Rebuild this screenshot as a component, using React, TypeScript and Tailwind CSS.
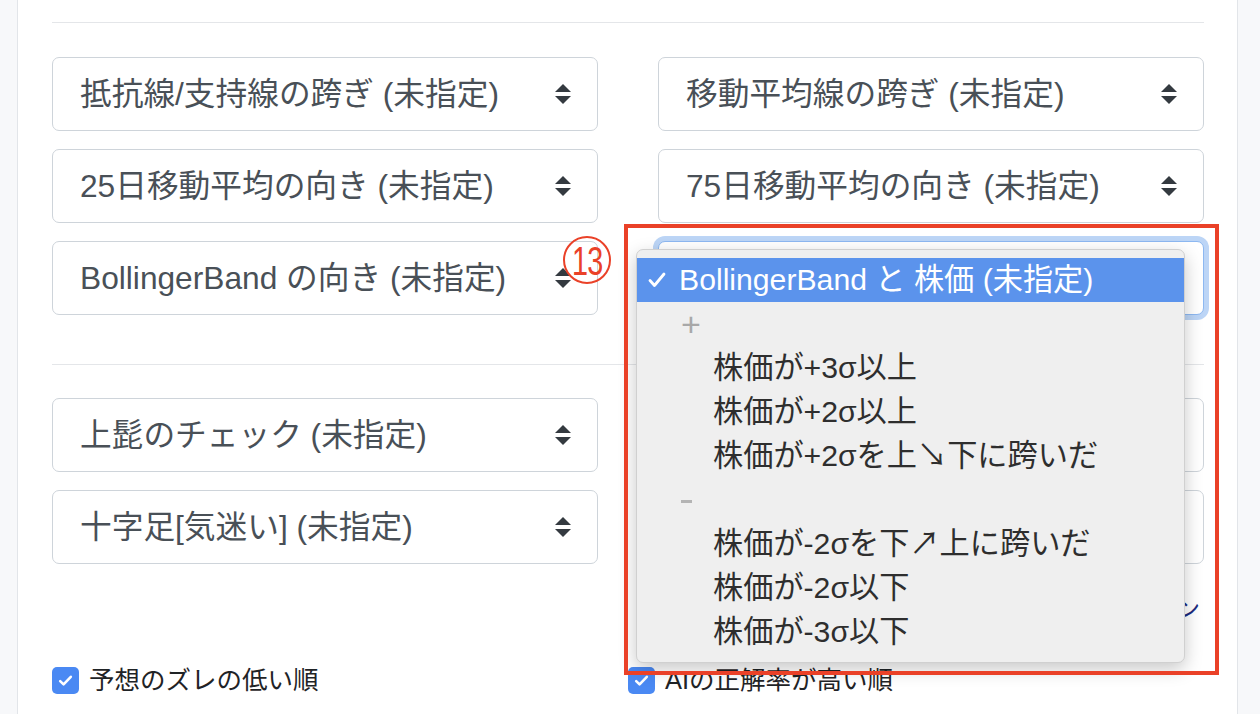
import clsx from "clsx";

const topRows = [
  ["抵抗線/支持線の跨ぎ (未指定)", "移動平均線の跨ぎ (未指定)"],
  ["25日移動平均の向き (未指定)", "75日移動平均の向き (未指定)"],
  ["BollingerBand の向き (未指定)", ""],
];

const bottomRows = [
  ["上髭のチェック (未指定)", "下髭のチェック (未指定)"],
  ["十字足[気迷い] (未指定)", "大陽線/大陰線 (未指定)"],
];

const options = [
  { group: "+", items: ["株価が+3σ以上", "株価が+2σ以上", "株価が+2σを上↘下に跨いだ"] },
  { group: "-", items: ["株価が-2σを下↗上に跨いだ", "株価が-2σ以下", "株価が-3σ以下"] },
];

function Select({ label, focused }: { label: string; focused?: boolean }) {
  return (
    <div
      className={clsx(
        "h-[74px] rounded-[7px] border bg-white flex items-center pl-[27px] pr-[26px] text-[31.7px] text-[#495057]",
        focused ? "border-[#8db8f1] ring-[5px] ring-[#bcd5f6]" : "border-[#ced4da]"
      )}
    >
      <span className="flex-1 whitespace-nowrap leading-[40px]">{label}</span>
      <svg width="16" height="20" viewBox="0 0 4 5" className="shrink-0">
        <path d="M2 0L0 2h4zm0 5L0 3h4z" fill="#343a40" />
      </svg>
    </div>
  );
}

function Check({ label }: { label: string }) {
  return (
    <label className="flex items-center gap-[10px] text-[25.5px] text-[#1f2326] leading-[31px]">
      <span className="w-[27px] h-[27px] rounded-[5px] bg-[#4a89f3] flex items-center justify-center">
        <svg width="17" height="17" viewBox="0 0 16 16" fill="none">
          <path d="M3 8.5l3.2 3.2L13 4.5" stroke="white" strokeWidth="2.4" strokeLinecap="round" strokeLinejoin="round" />
        </svg>
      </span>
      {label}
    </label>
  );
}

export default function App() {
  return (
    <div className="relative w-[1260px] h-[714px] overflow-hidden bg-[#f7f8fa] flex font-['Liberation_Sans','Noto_Sans_CJK_JP',sans-serif]">
      <div className="w-[17px] shrink-0" />
      <div className="w-[1221px] shrink-0 bg-white border-x border-[#e2e5e9] pl-[34px] pr-[33px]">
        <div className="h-[22px]" />
        <div className="border-t border-[#e4e6e9]" />

        <div className="mt-[34px] grid grid-cols-2 gap-x-[60px] gap-y-[18px]">
          {topRows.map(([l, r], i) => (
            <div key={i} className="contents">
              <Select label={l} />
              <Select label={r} focused={i === 2} />
            </div>
          ))}
        </div>

        <div className="mt-[49px] border-t border-[#e4e6e9]" />

        <div className="mt-[33px] grid grid-cols-2 gap-x-[60px] gap-y-[18px]">
          {bottomRows.map(([l, r], i) => (
            <div key={i} className="contents">
              <Select label={l} />
              <Select label={r} />
            </div>
          ))}
        </div>

        <div className="mt-[30px] h-[30px] text-right text-[24px] leading-[30px] text-[#1c2b7e] pr-[4px]">
          詳細検索オプション
        </div>

        <div className="mt-[41px] grid grid-cols-2">
          <Check label="予想のズレの低い順" />
          <Check label="AIの正解率が高い順" />
        </div>
      </div>
      <div className="flex-1" />

      {/* dropdown menu of the focused select */}
      <div className="absolute left-[636px] top-[249px] w-[549px] rounded-[7px] bg-[#efefef] border border-[#d0d0d0] shadow-[0_6px_18px_rgba(0,0,0,0.22)] py-[8px] text-[30.2px] leading-[36px] text-[#2e2e2e]">
        <div className="h-[44px] bg-[#5b93ec] text-white flex items-center">
          <span className="w-[42px] pl-[11px] flex items-center">
            <svg width="18" height="16" viewBox="0 0 18 16" fill="none">
              <path d="M2 8.5l4.5 5L16 2" stroke="white" strokeWidth="2.8" strokeLinecap="round" strokeLinejoin="round" />
            </svg>
          </span>
          <span className="whitespace-nowrap">BollingerBand と 株価 (未指定)</span>
        </div>
        {options.map((g) => (
          <div key={g.group}>
            <div className="h-[44px] flex items-center pl-[44px] text-[#a8a8a8]">
              {g.group === "+" ? (
                <span className="text-[34px] leading-[36px]">+</span>
              ) : (
                <span className="w-[11px] h-[3px] bg-[#b4b4b4] mt-[2px]" />
              )}
            </div>
            {g.items.map((it) => (
              <div key={it} className="h-[44px] flex items-center pl-[76px] whitespace-nowrap">
                {it}
              </div>
            ))}
          </div>
        ))}
      </div>

      {/* annotation */}
      <div className="absolute left-[624px] top-[224px] w-[595px] h-[451px] border-4 border-[#ea4128]" />
      <div className="absolute left-[563px] top-[236px] w-[48px] h-[48px] rounded-full border-[2.5px] border-[#ea4128] flex items-center justify-center">
        <span className="text-[40px] leading-none text-[#ea4128] tracking-[-1px] scale-x-[0.72] mt-[2px]">
          13
        </span>
      </div>
    </div>
  );
}
